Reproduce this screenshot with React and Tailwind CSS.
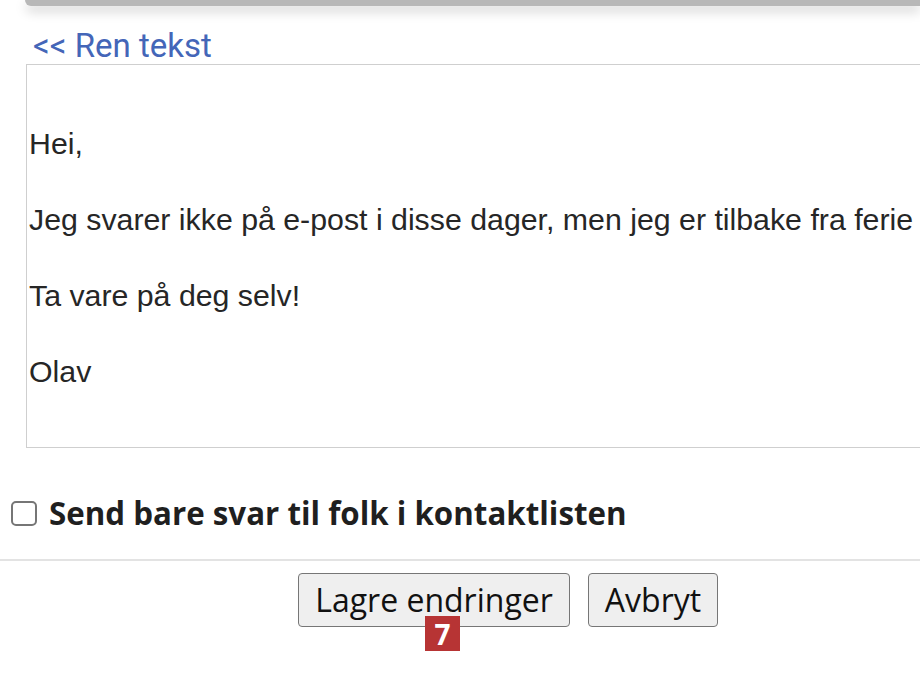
export default function App() {
  return (
    <div className="relative w-[920px] h-[682px] overflow-hidden bg-white">
      <div className="ml-[25px] h-[6px] rounded-bl-[6px] bg-[#b8b8b8] shadow-[0_5px_12px_rgba(0,0,0,0.22)]" />
      <div className="pl-[26px]">
        <div
          className="mt-[24px] ml-[7px] text-[33px] leading-[32px] text-[#4466b8]"
          style={{ fontFamily: "Roboto, sans-serif" }}
        >
          &lt;&lt; Ren tekst
        </div>
        <div
          className="mt-[2px] h-[384px] w-[920px] overflow-hidden border-[1.5px] border-[#cfcfcf] pl-[2px] pt-[64px] text-[30.3px] leading-[30px] text-[#262626]"
          style={{ fontFamily: "'Liberation Sans', Arial, sans-serif" }}
        >
          <p className="whitespace-nowrap">Hei,</p>
          <p className="mt-[46px] whitespace-nowrap">
            Jeg svarer ikke på e-post i disse dager, men jeg er tilbake fra ferie
          </p>
          <p className="mt-[46px] whitespace-nowrap">Ta vare på deg selv!</p>
          <p className="mt-[46px] whitespace-nowrap">Olav</p>
        </div>
      </div>
      <div className="mt-[48px] flex items-center pl-[11px]">
        <div className="h-[25px] w-[26px] rounded-[5px] border-[2px] border-[#767676] bg-white" />
        <span
          className="ml-[12px] text-[31.3px] font-bold leading-[34px] text-[#1f1f1f]"
          style={{ fontFamily: "'Open Sans', sans-serif" }}
        >
          Send bare svar til folk i kontaktlisten
        </span>
      </div>
      <div className="mt-[29px] h-[2px] w-full bg-[#e3e3e3]" />
      <div className="mt-[12px] flex pl-[298px] gap-[18px]">
        <div
          className="relative flex h-[54px] w-[272px] items-center justify-center rounded-[4px] border-[1.5px] border-[#767676] bg-[#efefef] text-[32px] text-[#111]"
          style={{ fontFamily: "'Open Sans', sans-serif" }}
        >
          Lagre endringer
          <div className="absolute left-[126px] top-[42px] flex h-[35px] w-[35px] items-center justify-center bg-[#b73434] text-[28px] font-bold leading-none text-white">
            7
          </div>
        </div>
        <div
          className="flex h-[54px] w-[130px] items-center justify-center rounded-[4px] border-[1.5px] border-[#767676] bg-[#efefef] text-[32px] text-[#111]"
          style={{ fontFamily: "'Open Sans', sans-serif" }}
        >
          Avbryt
        </div>
      </div>
    </div>
  );
}
